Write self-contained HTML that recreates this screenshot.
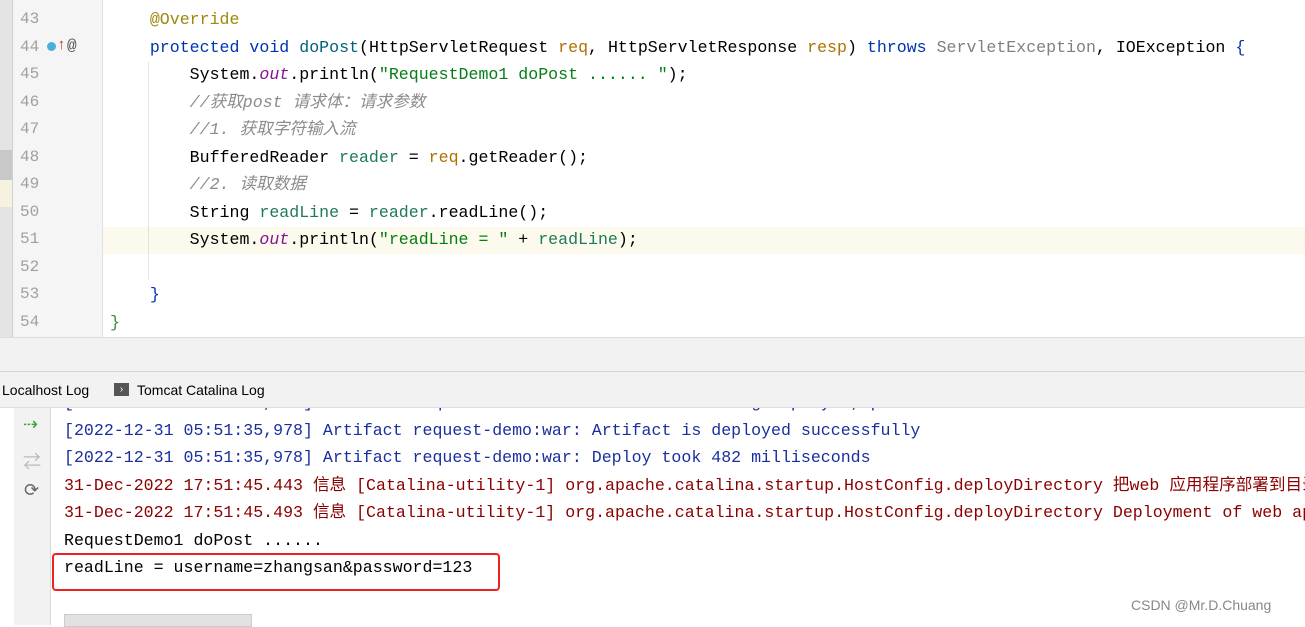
<!DOCTYPE html>
<html><head><meta charset="utf-8"><style>
body{margin:0;width:1305px;height:625px;overflow:hidden;background:#fff;font-family:"Liberation Mono","Noto Sans CJK SC",monospace;position:relative}
.abs{position:absolute}
.code{font-size:16.6px;white-space:pre;line-height:27.5px}
.ln{color:#a0a0a0;font-size:16px;left:20px}
.kw{color:#0033b3}.an{color:#9e880d}.str{color:#067d17}.cm{color:#8c8c8c;font-style:italic}.gr{color:#808080}.it{color:#871094;font-style:italic}.lv{color:#1f7a5c}.par{color:#b07000}
.blue{color:#1a2f9e}.red{color:#8b0000}
</style></head><body>
<div class="abs" style="left:0;top:0;width:12px;height:337px;background:#e4e4e4"></div>
<div class="abs" style="left:0;top:150px;width:12px;height:30px;background:#c8c8c8"></div>
<div class="abs" style="left:0;top:180px;width:12px;height:27px;background:#f5f3e0"></div>
<div class="abs" style="left:12px;top:0;width:1px;height:337px;background:#d0d0d0"></div>
<div class="abs" style="left:13px;top:0;width:89px;height:337px;background:#f5f5f5"></div>
<div class="abs" style="left:102px;top:0;width:1px;height:337px;background:#e0e0e0"></div>
<div class="abs" style="left:103px;top:227px;width:1202px;height:27px;background:#fcfaed"></div>
<div class="abs" style="left:148px;top:62px;width:1px;height:218px;background:#dde3ee"></div>
<div class="abs code ln" style="top:6px">43
44
45
46
47
48
49
50
51
52
53
54</div>
<div class="abs" style="left:47px;top:42px;width:9px;height:9px;border-radius:50%;background:#4ab0d9"></div>
<div class="abs" style="left:57px;top:38px;color:#d03030;font-size:15px;line-height:16px">↑</div>
<div class="abs" style="left:67px;top:37px;color:#555;font-size:16px">@</div>
<div class="abs code" style="top:6px;left:110px"><span>    </span><span class="an">@Override</span>
<span>    </span><span class="kw">protected void</span> <span style="color:#00627a">doPost</span>(HttpServletRequest <span class="par">req</span>, HttpServletResponse <span class="par">resp</span>) <span class="kw">throws</span> <span class="gr">ServletException</span>, IOException <span class="kw">{</span>
        System.<span class="it">out</span>.println(<span class="str">"RequestDemo1 doPost ...... "</span>);
        <span class="cm">//获取post 请求体：请求参数</span>
        <span class="cm">//1. 获取字符输入流</span>
        BufferedReader <span class="lv">reader</span> = <span class="par">req</span>.getReader();
        <span class="cm">//2. 读取数据</span>
        String <span class="lv">readLine</span> = <span class="lv">reader</span>.readLine();
        System.<span class="it">out</span>.println(<span class="str">"readLine = "</span> + <span class="lv">readLine</span>);

    <span class="kw">}</span>
<span style="color:#3a8a3a">}</span></div>
<!-- console -->
<div class="abs" style="left:0;top:407px;width:14px;height:218px;background:#fff;border-right:1px solid #d8d8d8"></div>
<div class="abs" style="left:14px;top:407px;width:36px;height:218px;background:#f2f2f2;border-right:1px solid #d8d8d8"></div>
<div class="abs" style="left:23px;top:414px;color:#3ca53c;font-size:18px">⇢</div>
<div class="abs" style="left:23px;top:448px;color:#bbb;font-size:18px">⇄</div>
<div class="abs" style="left:24px;top:480px;color:#666;font-size:18px">⟳</div>
<div class="abs code" style="left:64px;top:389px;font-size:16.6px;width:1241px;overflow:hidden"><span class="blue">[2022-12-31 05:51:35,478] Artifact request-demo:war: Artifact is being deployed, please wait...</span>
<span class="blue">[2022-12-31 05:51:35,978] Artifact request-demo:war: Artifact is deployed successfully</span>
<span class="blue">[2022-12-31 05:51:35,978] Artifact request-demo:war: Deploy took 482 milliseconds</span>
<span class="red">31-Dec-2022 17:51:45.443 信息 [Catalina-utility-1] org.apache.catalina.startup.HostConfig.deployDirectory 把web 应用程序部署到目录</span>
<span class="red">31-Dec-2022 17:51:45.493 信息 [Catalina-utility-1] org.apache.catalina.startup.HostConfig.deployDirectory Deployment of web app</span>
RequestDemo1 doPost ......
readLine = username=zhangsan&amp;password=123</div>
<!-- bands (on top) -->
<div class="abs" style="left:0;top:337px;width:1305px;height:34px;background:#f2f2f2;border-top:1px solid #ddd"></div>
<div class="abs" style="left:0;top:371px;width:1305px;height:35px;background:#f2f2f2;border-top:1px solid #d5d5d5;border-bottom:1px solid #e0e0e0;font-family:'Liberation Sans',sans-serif;font-size:14px;line-height:36px">
<span class="abs" style="left:2px">Localhost Log</span>
<span class="abs" style="left:114px;top:11px;width:15px;height:13px;background:#555;color:#fff;font-size:10px;line-height:13px;text-align:center">›</span>
<span class="abs" style="left:137px">Tomcat Catalina Log</span></div>
<div class="abs" style="left:52px;top:553px;width:444px;height:34px;border:2.5px solid #f02020;border-radius:4px"></div>
<div class="abs" style="left:64px;top:614px;width:186px;height:11px;background:#e2e2e2;border:1px solid #ccc"></div>
<div class="abs" style="left:1131px;top:597px;color:#888;font-family:'Liberation Sans',sans-serif;font-size:14px">CSDN @Mr.D.Chuang</div>
</body></html>
